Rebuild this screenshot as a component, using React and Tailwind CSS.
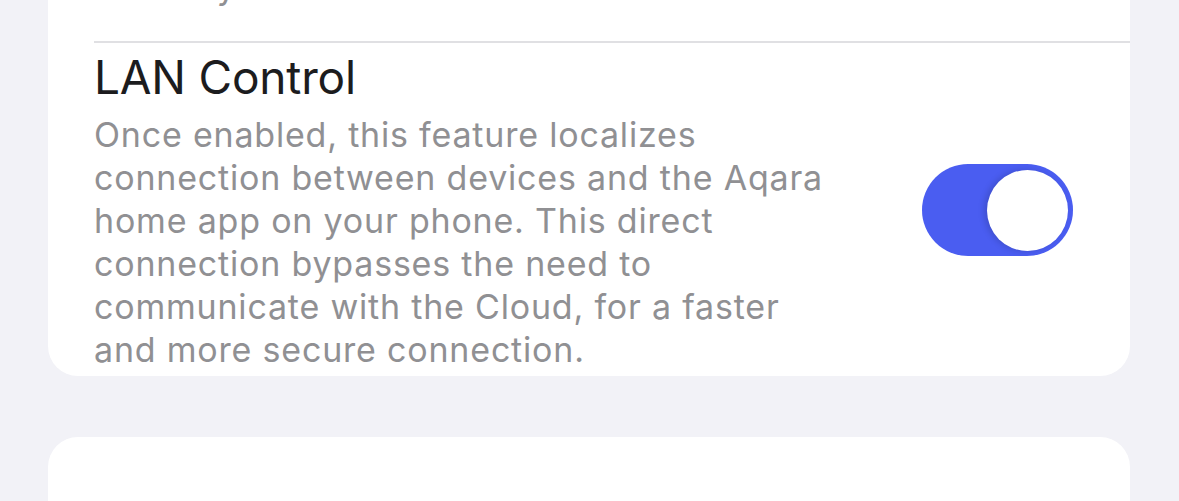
export default function App() {
  return (
    <div className="min-h-screen bg-[#f2f2f7] px-[48px] pr-[49px] font-['Inter','Noto_Sans',sans-serif] overflow-hidden h-[501px]">
      {/* tail of the previous setting's description, cut off by the viewport */}
      <div className="-mt-[35px] rounded-[30px] bg-white">
        <div className="pl-[46px]">
          <p className="text-[34px] leading-[43px] tracking-[0.8px] text-[#909093] pb-[33px]">instantly.</p>
          <div className="border-t-2 border-[#e0e0e3]" />
        </div>

        <div className="flex items-center pl-[46px] pr-[57px] pt-[6px] pb-[5px]">
          <div className="flex-1">
            <h2 className="text-[46px] leading-[56px] text-[#1c1c1e] tracking-[-0.2px]">LAN Control</h2>
            <p className="mt-[8px] text-[34px] leading-[43px] tracking-[0.8px] text-[#909093]">
              Once enabled, this feature localizes<br />
              connection between devices and the Aqara<br />
              home app on your phone. This direct<br />
              connection bypasses the need to<br />
              communicate with the Cloud, for a faster<br />
              and more secure connection.
            </p>
          </div>
          <button className="relative h-[92px] w-[151px] shrink-0 rounded-full bg-[#4a5df1]">
            <span className="absolute right-[5px] top-[5.5px] h-[81px] w-[81px] rounded-full bg-white shadow-[-3px_0_6px_rgba(0,0,0,0.15)]" />
          </button>
        </div>
      </div>

      <div className="mt-[61px] h-[120px] rounded-t-[30px] bg-white" />
    </div>
  )
}
